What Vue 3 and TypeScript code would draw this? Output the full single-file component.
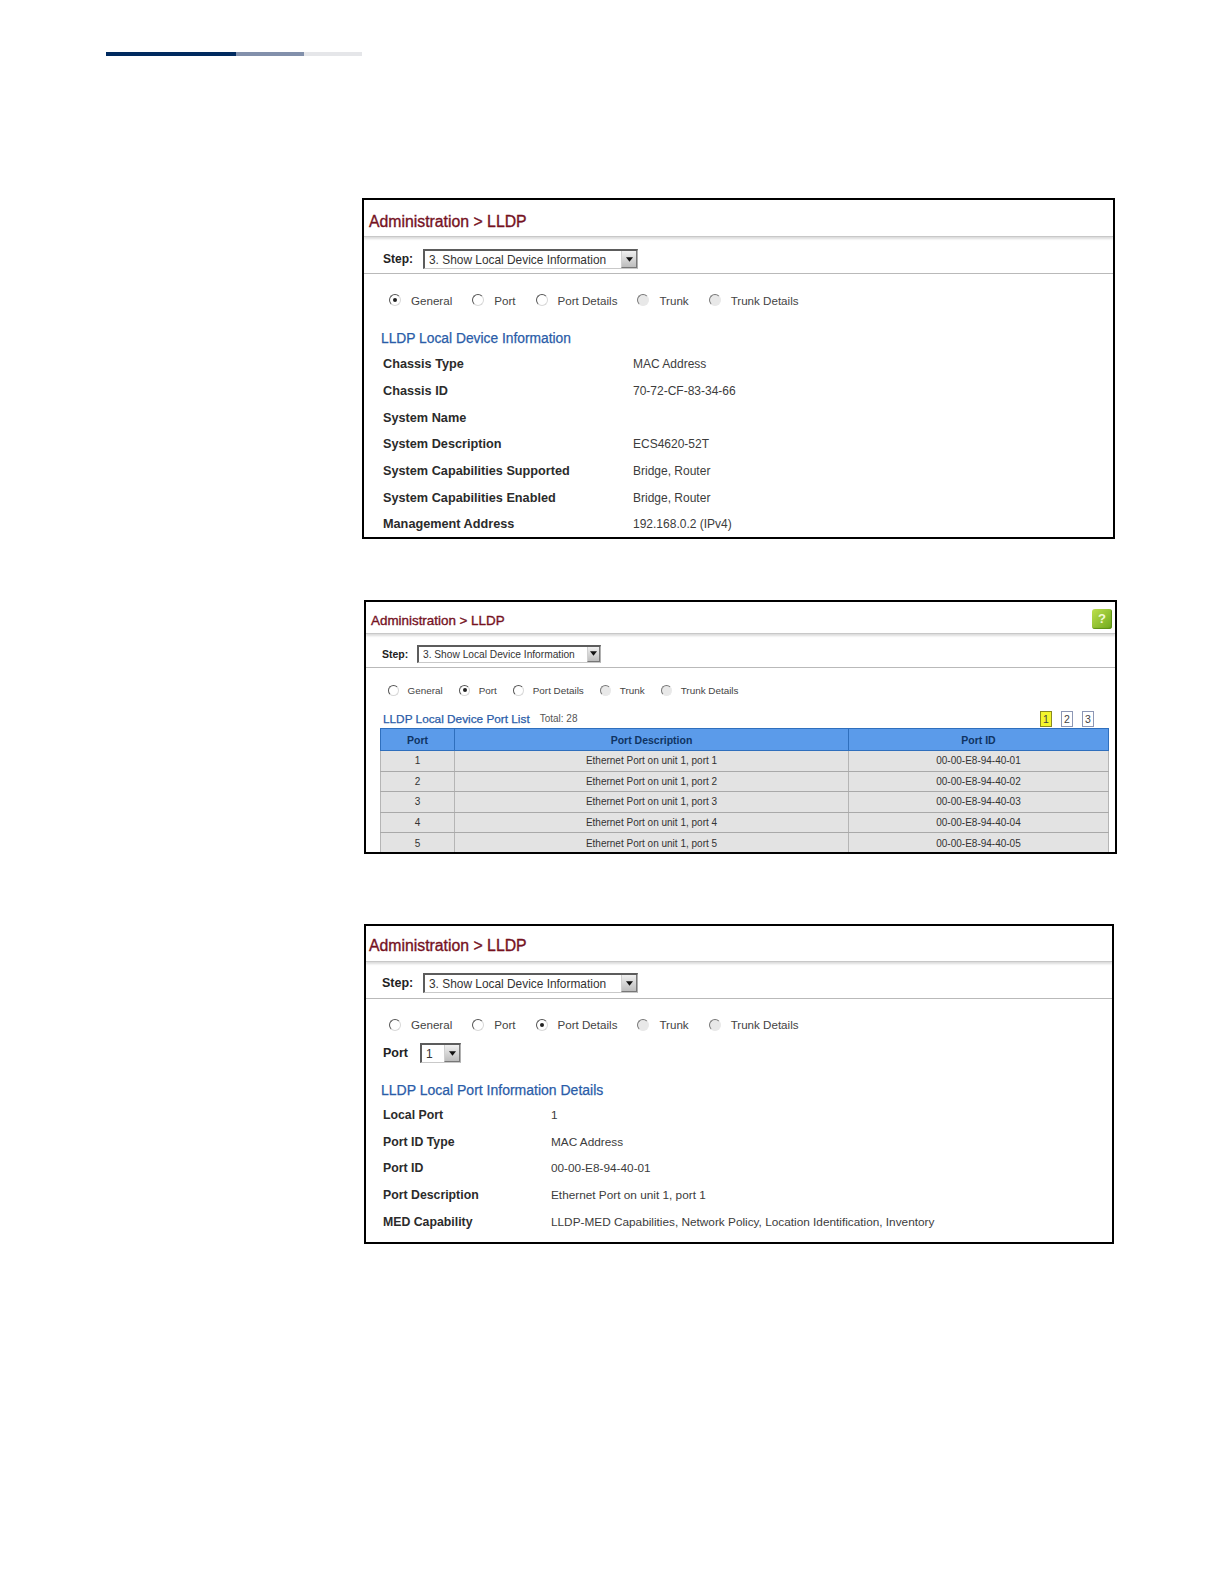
<script setup lang="ts">
interface Row { label: string; value: string }
const tabs: string[] = ['General', 'Port', 'Port Details', 'Trunk', 'Trunk Details']
const deviceRows: Row[] = [
  { label: 'Chassis Type', value: 'MAC Address' },
  { label: 'Chassis ID', value: '70-72-CF-83-34-66' },
  { label: 'System Name', value: '' },
  { label: 'System Description', value: 'ECS4620-52T' },
  { label: 'System Capabilities Supported', value: 'Bridge, Router' },
  { label: 'System Capabilities Enabled', value: 'Bridge, Router' },
  { label: 'Management Address', value: '192.168.0.2 (IPv4)' },
]
const portRows = [1, 2, 3, 4, 5].map((n) => ({
  port: n,
  desc: `Ethernet Port on unit 1, port ${n}`,
  id: `00-00-E8-94-40-0${n}`,
}))
const detailRows: Row[] = [
  { label: 'Local Port', value: '1' },
  { label: 'Port ID Type', value: 'MAC Address' },
  { label: 'Port ID', value: '00-00-E8-94-40-01' },
  { label: 'Port Description', value: 'Ethernet Port on unit 1, port 1' },
  { label: 'MED Capability', value: 'LLDP-MED Capabilities, Network Policy, Location Identification, Inventory' },
]
</script>

<template>
  <div class="page">
    <div class="bar"><i class="b1"></i><i class="b2"></i><i class="b3"></i></div>

    <section class="panel p1">
      <div class="title">Administration &gt; LLDP</div>
      <div class="step">
        <span class="step-label">Step:</span>
        <div class="select wide">
          <span class="select-text">3. Show Local Device Information</span>
          <span class="arrow"><svg viewBox="0 0 8 5"><path d="M0 0H8L4 5Z" /></svg></span>
        </div>
      </div>
      <div class="tabs">
        <label v-for="(t, i) in tabs" :key="t" class="tab">
          <span class="radio" :class="{ on: i === 0, dim: i > 2 }"></span>{{ t }}
        </label>
      </div>
      <h3 class="heading">LLDP Local Device Information</h3>
      <div v-for="r in deviceRows" :key="r.label" class="row">
        <span class="key">{{ r.label }}</span><span class="val">{{ r.value }}</span>
      </div>
    </section>

    <section class="panel p2">
      <div class="title">Administration &gt; LLDP
        <span class="help">?</span>
      </div>
      <div class="step">
        <span class="step-label">Step:</span>
        <div class="select wide">
          <span class="select-text">3. Show Local Device Information</span>
          <span class="arrow"><svg viewBox="0 0 8 5"><path d="M0 0H8L4 5Z" /></svg></span>
        </div>
      </div>
      <div class="tabs">
        <label v-for="(t, i) in tabs" :key="t" class="tab">
          <span class="radio" :class="{ on: i === 1, dim: i > 2 }"></span>{{ t }}
        </label>
      </div>
      <div class="list-head">
        <h3 class="heading">LLDP Local Device Port List</h3>
        <span class="total">Total: 28</span>
        <div class="pager">
          <span class="pg cur">1</span><span class="pg">2</span><span class="pg">3</span>
        </div>
      </div>
      <table class="grid">
        <colgroup><col class="c1" /><col class="c2" /><col class="c3" /></colgroup>
        <thead><tr><th>Port</th><th>Port Description</th><th>Port ID</th></tr></thead>
        <tbody>
          <tr v-for="r in portRows" :key="r.port">
            <td>{{ r.port }}</td><td>{{ r.desc }}</td><td>{{ r.id }}</td>
          </tr>
        </tbody>
      </table>
    </section>

    <section class="panel p3">
      <div class="title">Administration &gt; LLDP</div>
      <div class="step">
        <span class="step-label">Step:</span>
        <div class="select wide">
          <span class="select-text">3. Show Local Device Information</span>
          <span class="arrow"><svg viewBox="0 0 8 5"><path d="M0 0H8L4 5Z" /></svg></span>
        </div>
      </div>
      <div class="tabs">
        <label v-for="(t, i) in tabs" :key="t" class="tab">
          <span class="radio" :class="{ on: i === 2, dim: i > 2 }"></span>{{ t }}
        </label>
      </div>
      <div class="port-pick">
        <span class="step-label">Port</span>
        <div class="select small">
          <span class="select-text">1</span>
          <span class="arrow"><svg viewBox="0 0 8 5"><path d="M0 0H8L4 5Z" /></svg></span>
        </div>
      </div>
      <h3 class="heading">LLDP Local Port Information Details</h3>
      <div v-for="r in detailRows" :key="r.label" class="row">
        <span class="key">{{ r.label }}</span><span class="val">{{ r.value }}</span>
      </div>
    </section>
  </div>
</template>

<style>
html, body { background: #fff; }
</style>

<style scoped>
.page {
  width: 1224px;
  height: 1584px;
  box-sizing: border-box;
  padding-top: 52px;
  font-family: "Liberation Sans", Arial, sans-serif;
  color: #3a3a3a;
  overflow: hidden;
}
.bar { display: flex; height: 4px; margin-left: 106px; }
.bar i { display: block; height: 100%; }
.b1 { width: 130px; background: #002a5f; }
.b2 { width: 68px; background: #8290ab; }
.b3 { width: 58px; background: #e5e6e9; }

.panel {
  box-sizing: border-box;
  border: 2px solid #000;
  background: #fff;
  overflow: hidden;
}
.title {
  position: relative;
  color: #75121f;
  font-weight: 400;
  -webkit-text-stroke: 0.35px #75121f;
  border-bottom: 1px solid #c8c8c8;
  box-shadow: 0 2px 2px #dcdcdc;
  display: flex;
  align-items: center;
  box-sizing: border-box;
}
.step {
  display: flex;
  align-items: center;
  box-sizing: border-box;
  border-bottom: 1px solid #b9b9b9;
}
.step-label { font-weight: 700; color: #222; }
.select {
  display: flex;
  align-items: center;
  justify-content: space-between;
  box-sizing: border-box;
  background: #fff;
  border-style: solid;
  border-width: 2px 1px 1px 2px;
  border-color: #5c5c5c #b0b0b0 #c9c9c9 #5c5c5c;
  color: #333;
}
.select-text { white-space: nowrap; }
.arrow {
  display: flex;
  align-items: center;
  justify-content: center;
  height: 100%;
  background: linear-gradient(#f0f0f0, #bdbdbd);
  border-left: 1px solid #d0d0d0;
  border-right: 1px solid #777;
  border-bottom: 1px solid #777;
  box-sizing: border-box;
}
.arrow svg { width: 7px; height: 5px; fill: #111; }

.tabs { display: flex; align-items: center; }
.tab { display: flex; align-items: center; white-space: nowrap; color: #444; }
.radio {
  position: relative;
  display: block;
  box-sizing: border-box;
  border-radius: 50%;
  border: 1.5px solid;
  border-color: #555 #d8d8d8 #d8d8d8 #555;
  background: #fff;
}
.radio.dim { border-color: #777 #e8e8e8 #e8e8e8 #777; background: #e8e8e8; }
.radio.on::after {
  content: "";
  position: absolute;
  left: 50%;
  top: 50%;
  width: 4px;
  height: 4px;
  margin: -2px 0 0 -2px;
  border-radius: 50%;
  background: #222;
}
.heading { margin: 0; font-weight: 400; color: #2a5ca8; -webkit-text-stroke: 0.25px #2a5ca8; white-space: nowrap; }
.row { display: flex; align-items: center; white-space: nowrap; }
.key { font-weight: 700; color: #2b2b2b; }
.val { color: #3c3c3c; }

/* panel 1 */
.p1 { width: 753px; height: 341px; margin: 142px 0 0 362px; }
.p1 .title { height: 37px; padding: 8px 0 0 5px; font-size: 15.8px; }
.p1 .step { height: 37px; padding: 8px 0 0 19px; font-size: 12px; }
.p1 .step-label { width: 40px; }
.p1 .select, .p3 .select.wide { width: 215px; height: 20px; padding-left: 4px; font-size: 11.9px; }
.p1 .arrow, .p3 .arrow { width: 16px; }
.p1 .tabs, .p3 .tabs { padding-left: 25px; gap: 20px; font-size: 11.6px; }
.p1 .tabs { height: 52px; }
.p1 .tab, .p3 .tab { gap: 10px; }
.p1 .radio, .p3 .radio { width: 12px; height: 12px; }
.p1 .heading { height: 20px; line-height: 20px; margin: 3px 0 2px; padding-left: 17px; font-size: 13.8px; }
.p1 .row { height: 26.7px; padding-left: 19px; font-size: 12.7px; }
.p1 .key { width: 250px; }
.p1 .val { font-size: 12px; }

/* panel 2 */
.p2 { width: 753px; height: 254px; margin: 61px 0 0 364px; }
.p2 .title { height: 32px; padding: 5px 0 0 5px; font-size: 13.4px; }
.help {
  position: absolute;
  right: 3px;
  top: 7px;
  width: 20px;
  height: 20px;
  border-radius: 3px;
  background: linear-gradient(135deg, #bde04e, #6ea81c);
  box-shadow: inset -1px -1px 1px #5d8f14;
  color: #f2f9d6;
  -webkit-text-stroke: 0;
  font-weight: 700;
  font-size: 13px;
  line-height: 20px;
  text-align: center;
}
.p2 .step { height: 34px; padding: 6px 0 0 16px; font-size: 10.5px; }
.p2 .step-label { width: 35px; }
.p2 .select { width: 184px; height: 18px; padding-left: 4px; font-size: 10.2px; }
.p2 .arrow { width: 13px; }
.p2 .tabs { height: 44px; padding-left: 22px; gap: 16.5px; font-size: 9.9px; }
.p2 .tab { gap: 8.5px; }
.p2 .radio { width: 11px; height: 11px; }
.p2 .list-head { position: relative; display: flex; align-items: center; height: 19px; margin-top: -3px; padding-left: 17px; gap: 10px; }
.p2 .heading { font-size: 11.8px; }
.total { font-size: 10px; color: #555; }
.pager { position: absolute; right: 21px; top: 2px; display: flex; gap: 9px; }
.pg {
  box-sizing: border-box;
  width: 12px;
  height: 16px;
  border: 1px solid #8d97b5;
  font-size: 10.5px;
  line-height: 14px;
  text-align: center;
  color: #444;
}
.pg.cur { background: #f4f62c; border-color: #8a8a20; }
.grid {
  width: 728px;
  margin: 0 0 0 14px;
  border-collapse: collapse;
  table-layout: fixed;
  font-size: 10px;
}
.c1 { width: 74px; }
.c2 { width: 394px; }
.c3 { width: 260px; }
.grid th {
  height: 21px;
  padding: 0;
  background: #5b9bea;
  color: #0f3463;
  font-weight: 700;
  font-size: 10.5px;
  border: 1px solid #2f6fbd;
}
.grid td {
  height: 20.6px;
  padding: 0;
  box-sizing: border-box;
  text-align: center;
  background: #e3e3e3;
  color: #333;
  border-bottom: 1px solid #a9a9a9;
  border-left: 1px solid #b5b5b5;
  border-right: 1px solid #b5b5b5;
}

/* panel 3 */
.p3 { width: 750px; height: 320px; margin: 70px 0 0 364px; }
.p3 .title { height: 36px; padding: 5px 0 0 3px; font-size: 15.8px; }
.p3 .step { height: 37px; padding: 6px 0 0 16px; font-size: 12.5px; }
.p3 .step-label { width: 41px; }
.p3 .tabs { height: 51px; padding-left: 23px; }
.p3 .port-pick { display: flex; align-items: center; height: 30px; margin-top: -12px; padding-left: 17px; font-size: 12.5px; }
.p3 .port-pick .step-label { width: 37px; }
.p3 .select.small { width: 41px; height: 20px; padding-left: 4px; font-size: 12px; }
.p3 .heading { height: 20px; line-height: 20px; margin: 12px 0 2px; padding-left: 15px; font-size: 14px; }
.p3 .row { height: 26.6px; padding-left: 17px; font-size: 11.8px; }
.p3 .key { width: 168px; font-size: 12.3px; }
</style>
